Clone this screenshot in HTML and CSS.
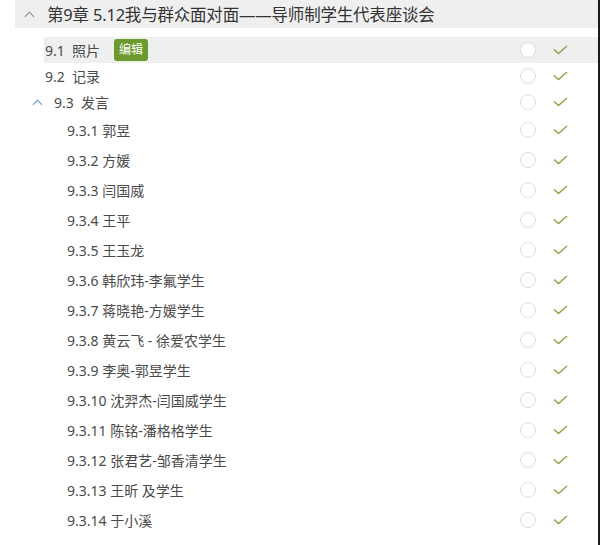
FILE: index.html
```html
<!DOCTYPE html>
<html lang="zh-CN">
<head>
    <meta charset="UTF-8">
    <title>第9章</title>
    <link rel="stylesheet" href="styles.css">
</head>
<body>
    <div class="page">
        <div class="chapter">
            <span class="chev chev-gray"></span>
            <span class="chapter-title">第9章 5.12我与群众面对面——导师制学生代表座谈会</span>
        </div>
        <ul class="toc">
            <li class="row lvl1 active">
                <span class="label">9.1&nbsp; 照片</span>
                <span class="badge">编辑</span>
                <span class="circle"></span>
                <svg class="check" viewBox="0 0 15 10"><polyline points="1,4.5 5.5,8.5 14,1"/></svg>
            </li>
            <li class="row lvl1">
                <span class="label">9.2&nbsp; 记录</span>
                <span class="circle"></span>
                <svg class="check" viewBox="0 0 15 10"><polyline points="1,4.5 5.5,8.5 14,1"/></svg>
            </li>
            <li class="row lvl1 open">
                <span class="chev chev-blue"></span>
                <span class="label">9.3&nbsp; 发言</span>
                <span class="circle"></span>
                <svg class="check" viewBox="0 0 15 10"><polyline points="1,4.5 5.5,8.5 14,1"/></svg>
            </li>
            <li class="row lvl2">
                <span class="label">9.3.1 郭昱</span>
                <span class="circle"></span>
                <svg class="check" viewBox="0 0 15 10"><polyline points="1,4.5 5.5,8.5 14,1"/></svg>
            </li>
            <li class="row lvl2">
                <span class="label">9.3.2 方媛</span>
                <span class="circle"></span>
                <svg class="check" viewBox="0 0 15 10"><polyline points="1,4.5 5.5,8.5 14,1"/></svg>
            </li>
            <li class="row lvl2">
                <span class="label">9.3.3 闫国威</span>
                <span class="circle"></span>
                <svg class="check" viewBox="0 0 15 10"><polyline points="1,4.5 5.5,8.5 14,1"/></svg>
            </li>
            <li class="row lvl2">
                <span class="label">9.3.4 王平</span>
                <span class="circle"></span>
                <svg class="check" viewBox="0 0 15 10"><polyline points="1,4.5 5.5,8.5 14,1"/></svg>
            </li>
            <li class="row lvl2">
                <span class="label">9.3.5 王玉龙</span>
                <span class="circle"></span>
                <svg class="check" viewBox="0 0 15 10"><polyline points="1,4.5 5.5,8.5 14,1"/></svg>
            </li>
            <li class="row lvl2">
                <span class="label">9.3.6 韩欣玮-李氟学生</span>
                <span class="circle"></span>
                <svg class="check" viewBox="0 0 15 10"><polyline points="1,4.5 5.5,8.5 14,1"/></svg>
            </li>
            <li class="row lvl2">
                <span class="label">9.3.7 蒋晓艳-方媛学生</span>
                <span class="circle"></span>
                <svg class="check" viewBox="0 0 15 10"><polyline points="1,4.5 5.5,8.5 14,1"/></svg>
            </li>
            <li class="row lvl2">
                <span class="label">9.3.8 黄云飞 - 徐爱农学生</span>
                <span class="circle"></span>
                <svg class="check" viewBox="0 0 15 10"><polyline points="1,4.5 5.5,8.5 14,1"/></svg>
            </li>
            <li class="row lvl2">
                <span class="label">9.3.9 李奥-郭昱学生</span>
                <span class="circle"></span>
                <svg class="check" viewBox="0 0 15 10"><polyline points="1,4.5 5.5,8.5 14,1"/></svg>
            </li>
            <li class="row lvl2">
                <span class="label">9.3.10 沈羿杰-闫国威学生</span>
                <span class="circle"></span>
                <svg class="check" viewBox="0 0 15 10"><polyline points="1,4.5 5.5,8.5 14,1"/></svg>
            </li>
            <li class="row lvl2">
                <span class="label">9.3.11 陈铭-潘格格学生</span>
                <span class="circle"></span>
                <svg class="check" viewBox="0 0 15 10"><polyline points="1,4.5 5.5,8.5 14,1"/></svg>
            </li>
            <li class="row lvl2">
                <span class="label">9.3.12 张君艺-邹香清学生</span>
                <span class="circle"></span>
                <svg class="check" viewBox="0 0 15 10"><polyline points="1,4.5 5.5,8.5 14,1"/></svg>
            </li>
            <li class="row lvl2">
                <span class="label">9.3.13 王昕 及学生</span>
                <span class="circle"></span>
                <svg class="check" viewBox="0 0 15 10"><polyline points="1,4.5 5.5,8.5 14,1"/></svg>
            </li>
            <li class="row lvl2">
                <span class="label">9.3.14 于小溪</span>
                <span class="circle"></span>
                <svg class="check" viewBox="0 0 15 10"><polyline points="1,4.5 5.5,8.5 14,1"/></svg>
            </li>
        </ul>
    </div>
</body>
</html>
```

FILE: styles.css
```css
body {
    margin: 0;
    padding: 0;
    background: #ffffff;
    font-family: "Noto Sans", "Noto Sans CJK SC", sans-serif;
    color: #444444;
}

.page {
    width: 600px;
    height: 545px;
    box-sizing: border-box;
    border-right: 2px solid #1a1a1a;
    overflow: hidden;
}

.chapter {
    margin-left: 15px;
    height: 28px;
    background: #efefef;
    display: flex;
    align-items: center;
}

.chapter-title {
    font-size: 16.5px;
    color: #333333;
    margin-left: 14px;
    letter-spacing: -0.2px;
}

.chev {
    display: inline-block;
    flex: none;
    width: 6px;
    height: 6px;
    border-left: 1.5px solid;
    border-top: 1.5px solid;
    transform: rotate(45deg);
}

.chev-gray {
    color: #8a8a8a;
    margin-left: 11px;
    margin-top: 4px;
}

.chev-blue {
    color: #5b9bd6;
    margin-top: 5px;
    margin-right: 13px;
}

.toc {
    list-style: none;
    margin: 9px 0 0 0;
    padding: 0;
}

.row {
    display: flex;
    align-items: center;
    padding-right: 30px;
}

.lvl1 {
    height: 26px;
    margin-left: 44px;
    padding-left: 1px;
}

.lvl1.open {
    margin-left: 20px;
    padding-left: 14px;
}

.lvl2 {
    height: 30px;
    margin-left: 44px;
    padding-left: 23px;
}

.active {
    background: #efefef;
}

.label {
    font-size: 14px;
    color: #4a4a4a;
    white-space: nowrap;
}

.badge {
    margin-left: 14px;
    background: #6c9a2c;
    color: #ffffff;
    font-size: 12px;
    line-height: 22px;
    padding: 0 5px;
    border-radius: 3px;
}

.circle {
    margin-left: auto;
    width: 14px;
    height: 14px;
    border: 1.5px solid #dcdcdc;
    border-radius: 50%;
    background: #ffffff;
}

.check {
    margin-left: 17px;
    width: 15px;
    height: 10px;
    fill: none;
    stroke: #8fa552;
    stroke-width: 1.6;
}
```
